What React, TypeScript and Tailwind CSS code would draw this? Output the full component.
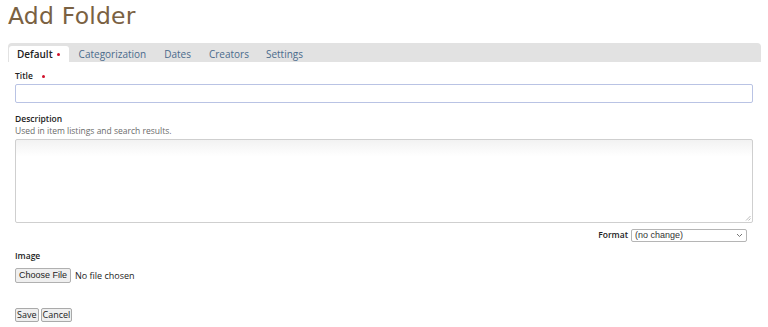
import React from "react";

export default function App() {
  const sans = { fontFamily: '"Open Sans", "Noto Sans", sans-serif' };
  return (
    <div className="w-[768px] h-[327px] bg-white overflow-hidden relative" style={sans}>
      <div className="px-[8px] pt-[1px]">
        <h1 className="text-[23.5px] leading-[30px] text-[#7a6142] tracking-[0.2px]" style={{ fontFamily: '"DejaVu Sans", sans-serif' }}>
          Add Folder
        </h1>
        <div className="mt-[12px] w-[753px] h-[19px] bg-[#e2e2e2] rounded-t-[4px] flex items-end pl-[1px] text-[10px]">
          <div className="h-[16px] pl-[8px] pr-[9px] bg-white rounded-t-[3px] flex items-center text-[#222] font-semibold">
            Default<span className="ml-[4px] w-[3px] h-[3px] rounded-full bg-[#d0102a]" />
          </div>
          <div className="h-[16px] flex items-center text-[#4a6a8c] ml-[10px]">Categorization</div>
          <div className="h-[16px] flex items-center text-[#4a6a8c] ml-[18px]">Dates</div>
          <div className="h-[16px] flex items-center text-[#4a6a8c] ml-[18px]">Creators</div>
          <div className="h-[16px] flex items-center text-[#4a6a8c] ml-[17px]">Settings</div>
        </div>
        <div className="pl-[7px]">
          <div className="mt-[8px] h-[12px] flex items-center text-[8.5px] font-semibold text-[#222]">
            Title<span className="ml-[9px] w-[3px] h-[3px] rounded-full bg-[#d0102a]" />
          </div>
          <div className="mt-[2px] w-[738px] h-[19px] border border-[#b9c3e4] rounded-[2px] bg-white" />
          <div className="mt-[10px] h-[12px] flex items-center text-[8.5px] font-semibold text-[#222]">Description</div>
          <div className="h-[12px] flex items-center text-[8.5px] text-[#6b6b6b]">Used in item listings and search results.</div>
          <div className="mt-[2px] w-[738px] h-[84px] border border-[#cfcfcf] rounded-[2px] bg-gradient-to-b from-[#f2f2f2] to-white to-[20%] relative">
            <svg className="absolute right-[1px] bottom-[1px]" width="6" height="6" viewBox="0 0 6 6">
              <path d="M5.5 1 L1 5.5 M5.5 3.5 L3.5 5.5" stroke="#aaa" strokeWidth="0.8" />
            </svg>
          </div>
          <div className="mt-[6px] w-[732px] flex justify-end items-center">
            <span className="text-[8.5px] font-semibold text-[#222] mr-[3px]">Format</span>
            <div className="w-[116px] h-[13px] border border-[#b5b5b5] rounded-[2px] flex items-center justify-between px-[3px] text-[9px] text-[#333]" style={{ fontFamily: '"Liberation Sans", sans-serif' }}>
              <span>(no change)</span>
              <svg width="7" height="5" viewBox="0 0 7 5"><path d="M1 1 L3.5 3.5 L6 1" stroke="#666" fill="none" strokeWidth="0.9" /></svg>
            </div>
          </div>
          <div className="mt-[8px] h-[12px] flex items-center text-[8.5px] font-semibold text-[#222]">Image</div>
          <div className="mt-[6px] flex items-center text-[9px]" style={{ fontFamily: '"Liberation Sans", sans-serif' }}>
            <div className="h-[15px] w-[56px] border border-[#b0b0b0] bg-[#efefef] rounded-[2px] flex items-center justify-center text-[#222]">Choose File</div>
            <span className="ml-[4px] text-[#222]" style={sans}>No file chosen</span>
          </div>
          <div className="mt-[25px] flex gap-[2px] text-[9px]" style={sans}>
            <div className="h-[14px] px-[1px] border border-[#aaa] bg-[#efefef] rounded-[2px] flex items-center text-[#222]">Save</div>
            <div className="h-[14px] px-[1px] border border-[#aaa] bg-[#efefef] rounded-[2px] flex items-center text-[#222]">Cancel</div>
          </div>
        </div>
      </div>
    </div>
  );
}
